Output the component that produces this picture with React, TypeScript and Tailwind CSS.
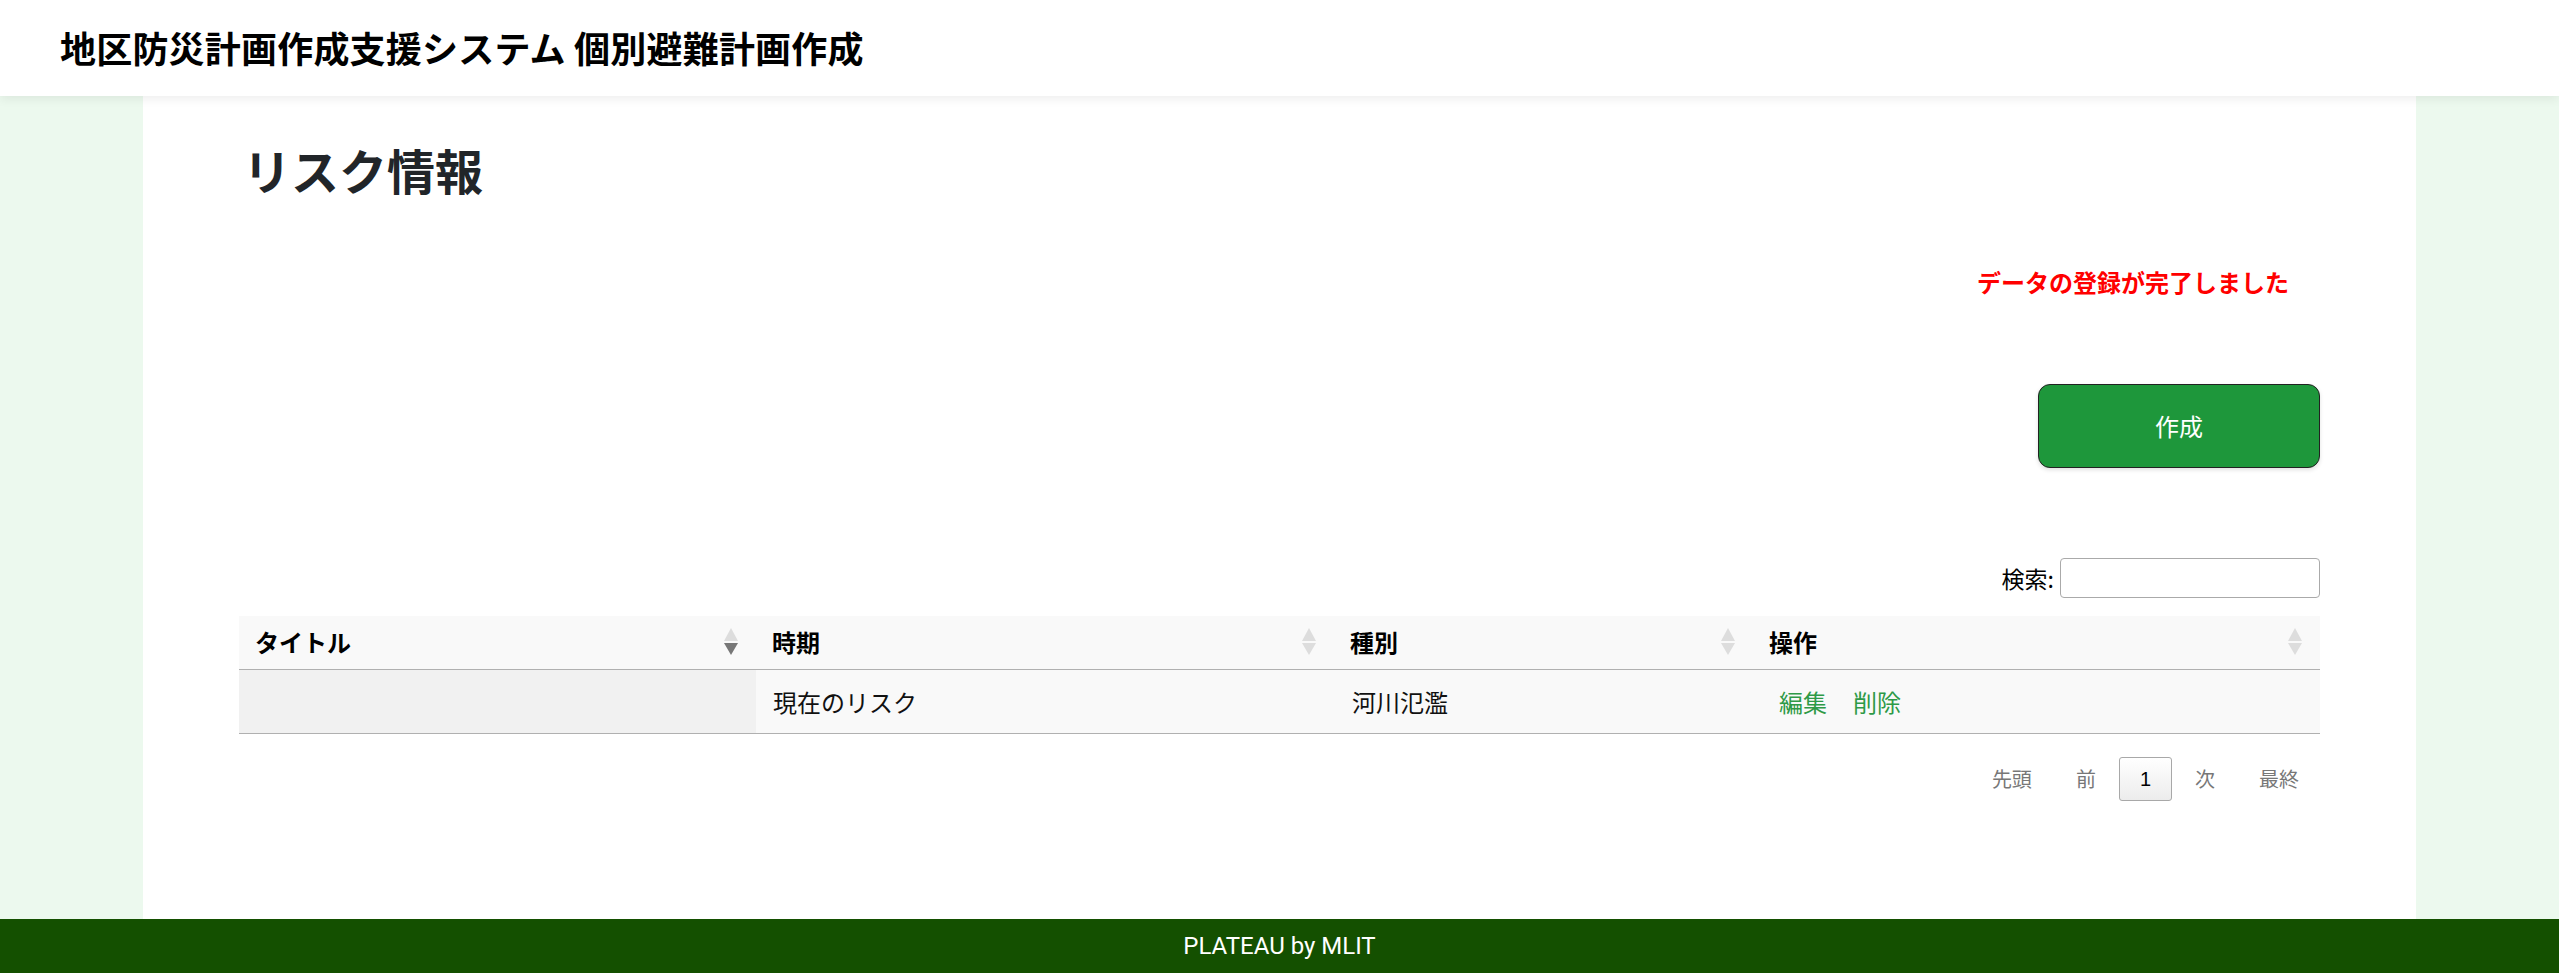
import React from "react";

const jp = '"Noto Sans CJK JP", "Noto Sans", sans-serif';

function SortIcon({ active }: { active?: boolean }) {
  return (
    <svg width="14" height="27" viewBox="0 0 14 27" className="shrink-0">
      <polygon points="7,0 14,13 0,13" fill="#dddddd" />
      <polygon points="0,15 14,15 7,27" fill={active ? "#777777" : "#dddddd"} />
    </svg>
  );
}

export default function App() {
  const cols = [
    { label: "タイトル", w: "w-[517px]", active: true },
    { label: "時期", w: "w-[578px]" },
    { label: "種別", w: "w-[419px]" },
    { label: "操作", w: "w-[567px]" },
  ];
  return (
    <div className="h-[973px] flex flex-col overflow-hidden" style={{ fontFamily: jp }}>
      <header className="relative z-10 h-[96px] shrink-0 bg-white flex items-center px-[60px] pb-[2px] shadow-[0_3px_10px_rgba(0,0,0,0.07)]">
        <h1 className="text-[36px] font-bold text-black leading-none tracking-[0.2px]">
          地区防災計画作成支援システム 個別避難計画作成
        </h1>
      </header>

      <main className="flex-1 bg-[#ecf9ee] flex justify-center">
        <div className="w-[2273px] bg-white px-[96px] pt-[44px] flex flex-col">
          <h2 className="text-[48px] leading-[58px] font-bold text-[#212529] pl-[4px]">リスク情報</h2>

          <div className="mt-[66px] flex justify-end pr-[31px]">
            <p className="text-[24px] leading-[36px] font-bold text-[#ff0000]">データの登録が完了しました</p>
          </div>

          <div className="mt-[84px] flex justify-end">
            <button className="w-[282px] h-[84px] rounded-[12px] border border-[#222222] bg-[#1e973b] text-white text-[24px] shadow-[0_2px_4px_rgba(0,0,0,0.12)]">
              作成
            </button>
          </div>

          <div className="mt-[90px] flex justify-end items-center gap-[6px]">
            <label className="text-[23px] leading-[40px] text-black">検索:</label>
            <input className="w-[260px] h-[40px] border border-[#aaaaaa] rounded-[4px] bg-white outline-none px-2" />
          </div>

          <div className="mt-[18px] flex flex-col w-[2081px] self-end">
            <div className="flex h-[54px] bg-[#f9f9f9] border-b border-[#b0b0b0]">
              {cols.map((c) => (
                <div key={c.label} className={`${c.w} flex items-center justify-between pl-[16px] pr-[18px] pb-[2px]`}>
                  <span className="text-[24px] font-bold text-black">{c.label}</span>
                  <SortIcon active={c.active} />
                </div>
              ))}
            </div>
            <div className="flex h-[64px] bg-[#f9f9f9] border-b border-[#b0b0b0] text-[24px] text-[#111111]">
              <div className="w-[517px] bg-[#f1f1f1]" />
              <div className="w-[578px] flex items-center pl-[17px]">現在のリスク</div>
              <div className="w-[419px] flex items-center pl-[18px]">河川氾濫</div>
              <div className="w-[567px] flex items-center pl-[26px] gap-[26px] text-[#2e9a47]">
                <span>編集</span>
                <span>削除</span>
              </div>
            </div>
          </div>

          <div className="mt-[23px] flex justify-end gap-[2px] text-[20px] leading-[22px]">
            <span className="px-[20px] py-[10px] border border-transparent text-[#777777]">先頭</span>
            <span className="px-[20px] py-[10px] border border-transparent text-[#777777]">前</span>
            <span
              className="px-[20px] py-[10px] border border-[#a8a8a8] rounded-[3px] bg-gradient-to-b from-white to-[#ececec] text-black"
              style={{ fontFamily: '"Liberation Sans", Arial, sans-serif' }}
            >
              1
            </span>
            <span className="px-[20px] py-[10px] border border-transparent text-[#777777]">次</span>
            <span className="px-[20px] py-[10px] border border-transparent text-[#777777]">最終</span>
          </div>
        </div>
      </main>

      <footer
        className="h-[54px] shrink-0 bg-[#145000] flex items-center justify-center text-white text-[24px]"
        style={{ fontFamily: 'Roboto, "Noto Sans", sans-serif' }}
      >
        PLATEAU by MLIT
      </footer>
    </div>
  );
}
